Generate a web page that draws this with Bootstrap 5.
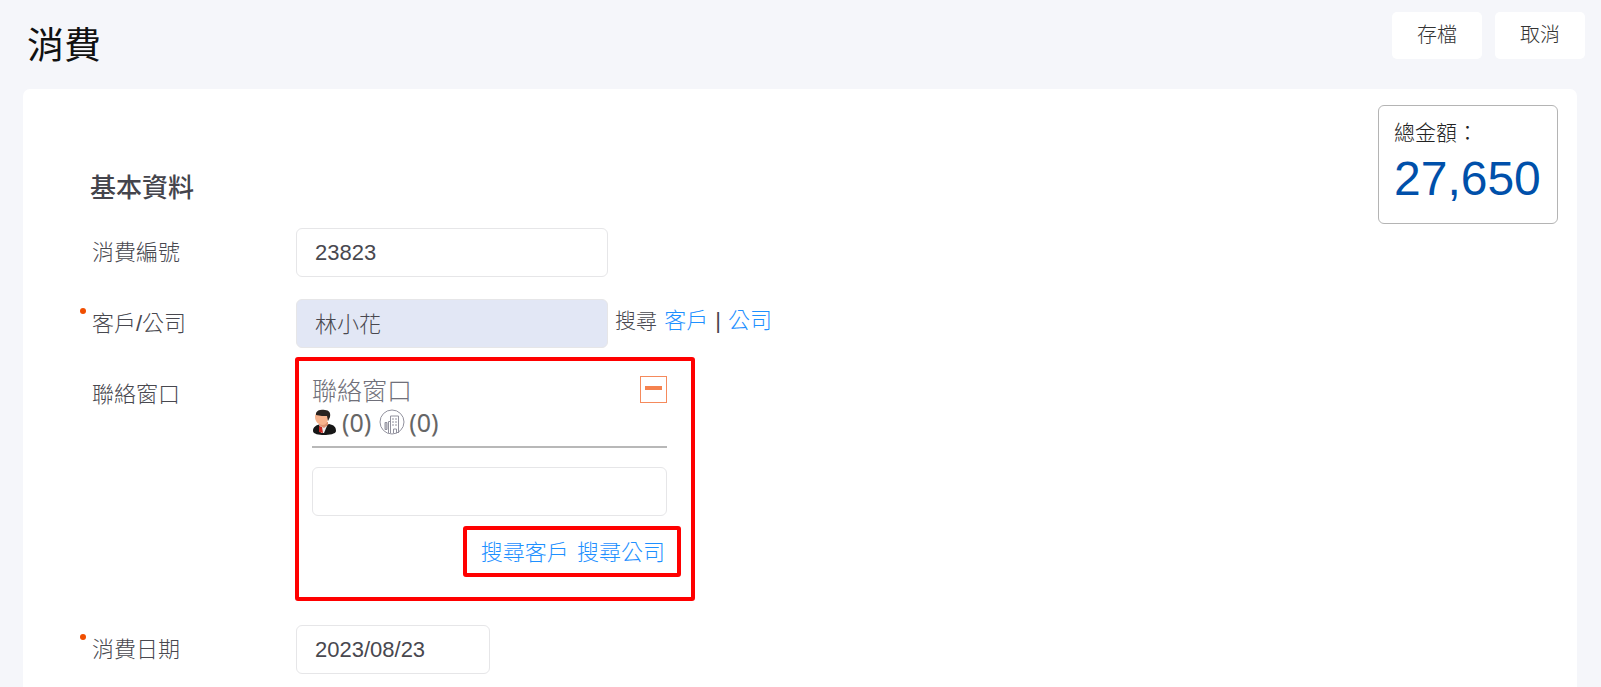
<!DOCTYPE html>
<html lang="zh-Hant">
<head>
<meta charset="utf-8">
<meta name="viewport" content="width=device-width, initial-scale=1">
<title>消費</title>
<link href="https://cdn.jsdelivr.net/npm/bootstrap@5.3.0/dist/css/bootstrap.min.css" rel="stylesheet">
<style>
  body { background: #f5f6fa; color: #48484f; font-family: "Liberation Sans", "Noto Sans CJK TC", sans-serif; font-size: 22px; font-weight: 300; line-height: 32px; }
  a { color: #1e90ff; text-decoration: none; }
  .page-head { height: 89px; padding: 12px 16px 0 27px; }
  .page-title { font-size: 37px; line-height: 48px; font-weight: 400; color: #111; margin: 11px 0 0; }
  .head-actions { gap: 13px; }
  .btn-plain { width: 90px; height: 47px; padding: 0 0 2px; background: #fff; border: 0; border-radius: 5px; font-size: 20px; font-weight: 300; color: #333; }
  .sheet { background: #fff; border-radius: 7px 7px 0 0; margin: 0 24px 0 23px; padding: 16px 19px 12px 69px; }
  .form-area { padding-top: 65px; }
  .section-title { font-size: 26px; line-height: 36px; font-weight: 500; color: #44444c; margin: 0 0 22px -2px; }
  .field-row { margin-bottom: 22px; }
  .field-label { width: 204px; font-size: 22px; line-height: 49px; position: relative; }
  .required::before { content: ""; position: absolute; left: -12px; top: 9px; width: 6px; height: 6px; border-radius: 50%; background: #f04e00; }
  .field { height: 49px; border: 1px solid #e6e6e8; border-radius: 6px; padding: 0 18px; font-size: 22px; font-weight: 300; color: #48484f; }
  .field.digits { font-weight: 400; }
  .field[readonly] { background: #e2e7f5; padding-bottom: 4px; }
  .w-field { width: 312px; }
  .w-date { width: 194px; }
  .lookup { padding: 6px 0 0 7px; }
  .lookup a { margin: 0 1px; }
  .lookup span { font-size: 21px; }
  .total { width: 180px; height: 119px; border: 1px solid #b4b4b4; border-radius: 6px; padding: 11px 0 0 15px; color: #222; font-size: 21px; }
  .total output { display: block; font-size: 48px; line-height: 56px; font-weight: 400; color: #0050aa; margin-top: 2px; }
  .contact { width: 400px; border: 4px solid #f00; border-radius: 3px; padding: 15px 10px 20px 13px; margin: -13px 0 2px -1px; }
  .contact-inner { margin-right: 14px; }
  .contact-head { border-bottom: 2px solid #b8b8b8; margin-bottom: 19px; height: 72px; }
  .contact-title { font-size: 25px; line-height: 30px; color: #70707a; }
  .counts { font-family: "Noto Sans", sans-serif; font-size: 25px; line-height: 32px; font-weight: 400; color: #666; }
  .toggle { width: 27px; height: 27px; border: 1px solid #f58a5c; background: #fff; padding: 0 0 3px; }
  .toggle i { display: block; width: 17px; height: 4px; background: #f5824f; }
  .search-links { border: 4px solid #f00; border-radius: 3px; height: 51px; padding: 2px 12px 0 14px; margin-top: 10px; }
  .search-links a + a { margin-left: 2px; }
</style>
</head>
<body class="d-flex flex-column min-vh-100">
<header class="page-head d-flex justify-content-between align-items-start">
  <h1 class="page-title">消費</h1>
  <div class="head-actions d-flex">
    <button type="submit" form="expense" class="btn-plain">存檔</button>
    <button type="button" class="btn-plain">取消</button>
  </div>
</header>
<main class="sheet d-flex flex-grow-1 align-items-start">
  <form id="expense" class="form-area flex-grow-1">
    <h2 class="section-title">基本資料</h2>
    <div class="field-row d-flex">
      <label class="field-label" for="no">消費編號</label>
      <input id="no" class="field digits w-field" value="23823">
    </div>
    <div class="field-row d-flex">
      <label class="field-label required" for="customer">客戶/公司</label>
      <input id="customer" class="field w-field" value="林小花" readonly>
      <div class="lookup"><span>搜尋</span> <a href="#">客戶</a> | <a href="#">公司</a></div>
    </div>
    <div class="field-row d-flex">
      <label class="field-label" for="contact">聯絡窗口</label>
      <section class="contact">
        <div class="contact-inner">
          <div class="contact-head d-flex justify-content-between align-items-start">
            <div>
              <div class="contact-title">聯絡窗口</div>
              <div class="counts d-flex align-items-center">
                <svg width="26" height="26" viewBox="0 0 26 26" aria-hidden="true">
                  <path d="M1 22c0-4 3-6 8-7l4 2 4-2c5 1 7 3 7 7 0 3-7 4-12 4S1 25 1 22z" fill="#171717"/>
                  <path d="M7 15l2-1 6 3-3 7H9z" fill="#eee"/>
                  <path d="M7 13h9v3l-4 3-5-3z" fill="#dc9270"/>
                  <path d="M3 8c0-4 3-6 7-6s7 3 6 7c0 4-2 7-5 7-4 0-8-3-8-8z" fill="#f7b38d"/>
                  <path d="M4 4c1-3 5-4 9-3 4 0 6 3 5 7l-2 4-1-5c-3 0-7 0-11-1z" fill="#29221f"/>
                  <path d="M7 17l3 1 1 6-4-1z" fill="#c92822"/>
                </svg>
                <span class="ms-1">(0)</span>
                <svg class="ms-2" width="26" height="26" viewBox="0 0 26 26" fill="none" stroke="#92929e" aria-hidden="true">
                  <circle cx="13" cy="13" r="12"/>
                  <path d="M11.500 24V7h8v17M7 13v8M6 13.500h2v7H6zM9.500 24V12.500h2M14.500 24v-4h3v4"/>
                  <path d="M13 10h5M13 13h5M13 16h5" stroke-dasharray="2 1"/>
                </svg>
                <span class="ms-1">(0)</span>
              </div>
            </div>
            <button type="button" class="toggle d-flex align-items-center justify-content-center" aria-label="收合"><i></i></button>
          </div>
          <input id="contact" class="field w-100 d-block">
        </div>
        <div class="d-flex justify-content-end">
          <div class="search-links d-flex align-items-center"><span><a href="#">搜尋客戶</a> <a href="#">搜尋公司</a></span></div>
        </div>
      </section>
    </div>
    <div class="d-flex">
      <label class="field-label required" for="date">消費日期</label>
      <input id="date" class="field digits w-date" value="2023/08/23">
    </div>
  </form>
  <aside class="total flex-shrink-0">
    <label for="sum" class="d-block">總金額：</label>
    <output id="sum">27,650</output>
  </aside>
</main>
<script src="https://cdn.jsdelivr.net/npm/bootstrap@5.3.0/dist/js/bootstrap.bundle.min.js"></script>
</body>
</html>
